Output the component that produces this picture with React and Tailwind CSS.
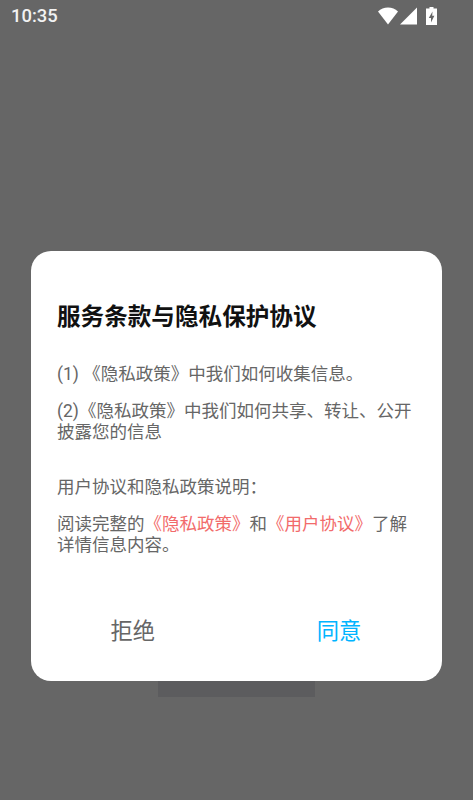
const cjk = 'font-["Roboto","Noto_Sans_CJK_SC",sans-serif]';

function StatusIcons() {
  return (
    <div className="flex items-center">
      <svg width="20" height="18" viewBox="0 0 20 18">
        <path d="M0 4.500C2.700 2 6.200 0.500 10 0.500S17.300 2 20 4.500L10 17.500Z" fill="#fff" />
      </svg>
      <svg width="17" height="18" viewBox="0 0 17 18" className="ml-[1.500px]">
        <path d="M0 17.500L17 0.500V17.500Z" fill="#fff" />
      </svg>
      <svg width="11" height="18" viewBox="0 0 11 18" className="ml-[9.500px]">
        <path
          fillRule="evenodd"
          d="M3.500 0H7.500V1.500H11V18H0V1.500H3.500ZM6.500 4.500L2.800 11H5V15.500L8.400 8.800H6.200Z"
          fill="#fff"
        />
      </svg>
    </div>
  );
}

export default function App() {
  return (
    <div className={`min-h-[800px] bg-[#666666] flex flex-col ${cjk}`}>
      <div className="h-[32px] flex items-center justify-between pl-[11px] pr-[36px]">
        <span className="text-[18.4px] font-medium text-[#f2f2f2] leading-none">10:35</span>
        <StatusIcons />
      </div>

      <div className="mt-[218.500px] mx-[30.500px] w-[411.500px] h-[430.500px] bg-white rounded-[20px] flex flex-col pl-[26.500px] pr-[26px]">
        <h1 className="mt-[50px] text-[23.600px] leading-[32px] font-bold text-[#111111]">
          服务条款与隐私保护协议
        </h1>
        <p className="mt-[32px] text-[17.500px] leading-[18px] text-[#666666]">(1) 《隐私政策》中我们如何收集信息。</p>
        <p className="mt-[18px] text-[17.500px] leading-[21px] text-[#666666]">
          (2)《隐私政策》中我们如何共享、转让、公开披露您的信息
        </p>
        <p className="mt-[35px] text-[17.500px] leading-[18px] text-[#666666]">用户协议和隐私政策说明：</p>
        <p className="mt-[18px] text-[17.500px] leading-[21px] text-[#666666]">
          阅读完整的<span className="text-[#f26b6b]">《隐私政策》</span>和<span className="text-[#f26b6b]">《用户协议》</span>了解详情信息内容。
        </p>
        <div className="mt-auto mb-[30px] -ml-[26.500px] -mr-[26px] grid grid-cols-2 text-[22.300px] leading-[40px] text-center">
          <button className="text-[#666666] pr-[1px]">拒绝</button>
          <button className="text-[#00b4ff] pl-[0px]">同意</button>
        </div>
      </div>

      <div className="mx-auto w-[157px] h-[16px] bg-[#5c5c5e]" />
    </div>
  );
}
